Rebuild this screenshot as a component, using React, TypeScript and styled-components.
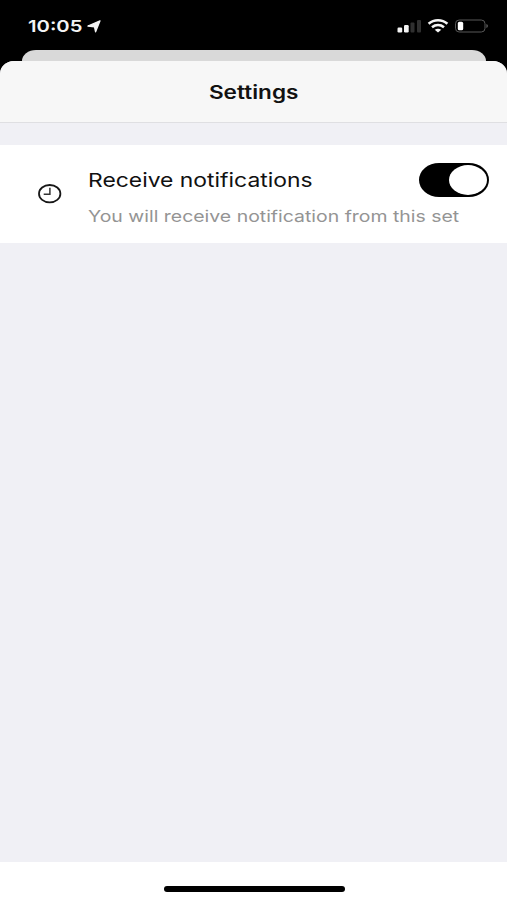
import React from "react";
import styled, { createGlobalStyle } from "styled-components";

const GlobalStyle = createGlobalStyle`
  * { box-sizing: border-box; }
  html, body { margin: 0; padding: 0; background: #000; }
  body { font-family: Inter, "Liberation Sans", sans-serif; }
`;

const Screen = styled.div`
  display: flex;
  flex-direction: column;
  width: 507px;
  height: 900px;
  overflow: hidden;
  background: #000;
`;

const StatusBar = styled.header`
  display: flex;
  align-items: center;
  justify-content: space-between;
  height: 50px;
  padding: 2px 18px 0 28px;
  color: #f4f4f4;
`;

const StatusGroup = styled.div`
  display: flex;
  align-items: center;
`;

const Label = styled.span<{ $size: number; $weight?: number; $stretch: number; $color?: string; $origin?: string }>`
  display: block;
  font-size: ${(p) => p.$size}px;
  font-weight: ${(p) => p.$weight ?? 400};
  line-height: 24px;
  color: ${(p) => p.$color ?? "inherit"};
  white-space: nowrap;
  transform: scaleX(${(p) => p.$stretch});
  transform-origin: ${(p) => p.$origin ?? "left"} center;
`;

const TimeSlot = styled.div`
  width: 59px;
`;

const BackSheet = styled.div`
  height: 11px;
  margin: 0 21px 0 22px;
  border-radius: 14px 14px 0 0 / 11px 11px 0 0;
  background: #d9d9d9;
`;

const Sheet = styled.main`
  display: flex;
  flex: 1;
  flex-direction: column;
  overflow: hidden;
  border-radius: 14px 14px 0 0 / 13px 13px 0 0;
  background: #f0f0f5;
`;

const TitleBar = styled.div`
  display: flex;
  align-items: center;
  justify-content: center;
  height: 62px;
  border-bottom: 1px solid #dfdfe2;
  background: #f7f7f7;
  color: #111;
`;

const SettingRow = styled.section`
  display: flex;
  height: 98px;
  margin-top: 22px;
  padding: 0 18px 0 38px;
  background: #fff;
`;

const IconSlot = styled.div`
  width: 50px;
  padding-top: 39px;
`;

const RowBody = styled.div`
  flex: 1;
`;

const RowHeading = styled.div`
  display: flex;
  justify-content: space-between;
  height: 59px;
  padding-top: 18px;
`;

const HeadingText = styled.div`
  padding-top: 6px;
`;

const Toggle = styled.button`
  display: flex;
  justify-content: flex-end;
  width: 70px;
  height: 34px;
  padding: 2px 2px 2px 0;
  border: 0;
  border-radius: 20px / 17px;
  background: #000;
`;

const Knob = styled.span`
  width: 38px;
  height: 30px;
  border-radius: 50%;
  background: #fff;
`;

const Footer = styled.footer`
  display: flex;
  justify-content: center;
  height: 38px;
  margin-top: auto;
  padding: 24px 0 0 2px;
  background: #fff;
`;

const HomeIndicator = styled.div`
  width: 181px;
  height: 6px;
  border-radius: 3px;
  background: #000;
`;

const LocationIcon = () => (
  <svg width="14" height="13" viewBox="0 0 14 13">
    <path d="M13 .8 8.6 11.8 7.5 6.9.9 6Z" fill="#f4f4f4" stroke="#f4f4f4" strokeWidth="1.3" strokeLinejoin="round" />
  </svg>
);

const StatusIcons = () => (
  <svg width="92" height="16" viewBox="397 18.5 92 16">
    <rect x="397.5" y="28" width="4.7" height="5" rx="1.2" fill="#f4f4f4" />
    <rect x="404" y="25.5" width="4.7" height="7.5" rx="1.2" fill="#f4f4f4" />
    <rect x="410.5" y="23" width="4" height="10" rx="1" fill="#303030" />
    <rect x="417" y="20.5" width="4" height="12.5" rx="1" fill="#303030" />
    <g fill="none" stroke="#f4f4f4" strokeWidth="2.6">
      <path d="M428.6 24.3C434 19.6 442 19.6 447.4 24.3" />
      <path d="M432 27.8C435.6 24.9 440.4 24.9 444 27.8" />
    </g>
    <path d="M434.7 30.3Q438 28 441.3 30.3L438 33Z" fill="#f4f4f4" />
    <rect x="455.5" y="20.5" width="29.5" height="12" rx="3.7" fill="none" stroke="#585858" />
    <rect x="457.8" y="22.3" width="5.4" height="8.5" rx="1.6" fill="#fff" />
    <path d="M486.3 24.4Q488 25 488 26.5T486.3 28.6Z" fill="#585858" />
  </svg>
);

const ClockIcon = () => (
  <svg width="24" height="20" viewBox="0 0 24 20">
    <ellipse cx="11.7" cy="9.7" rx="10.7" ry="8.7" fill="none" stroke="#171717" strokeWidth="1.8" />
    <path d="M11.9 3.8V10.2H5.7" fill="none" stroke="#333" strokeWidth="1.5" />
  </svg>
);

export default function App() {
  return (
    <>
      <GlobalStyle />
      <Screen>
        <StatusBar>
          <StatusGroup>
            <TimeSlot>
              <Label $size={16.6} $weight={600} $stretch={1.22}>10:05</Label>
            </TimeSlot>
            <LocationIcon />
          </StatusGroup>
          <StatusIcons />
        </StatusBar>
        <BackSheet />
        <Sheet>
          <TitleBar>
            <Label $size={18.5} $weight={600} $stretch={1.22} $origin="center">Settings</Label>
          </TitleBar>
          <SettingRow>
            <IconSlot>
              <ClockIcon />
            </IconSlot>
            <RowBody>
              <RowHeading>
                <HeadingText>
                  <Label $size={19} $stretch={1.204} $color="#111">Receive notifications</Label>
                </HeadingText>
                <Toggle type="button" role="switch" aria-checked="true" aria-label="Receive notifications">
                  <Knob />
                </Toggle>
              </RowHeading>
              <Label $size={16.3} $stretch={1.194} $color="#949494">You will receive notification from this set</Label>
            </RowBody>
          </SettingRow>
          <Footer>
            <HomeIndicator />
          </Footer>
        </Sheet>
      </Screen>
    </>
  );
}
